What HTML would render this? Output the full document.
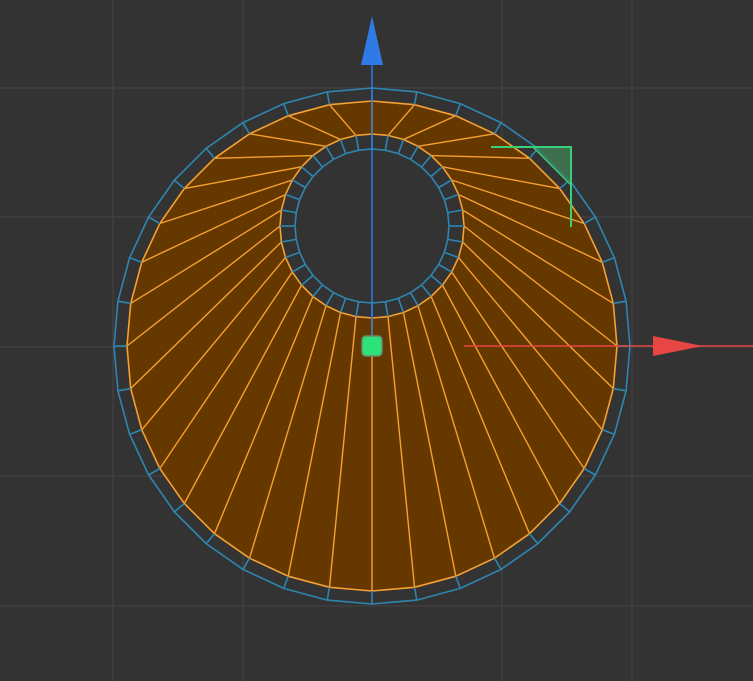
<!DOCTYPE html>
<html><head><meta charset="utf-8"><style>
html,body{margin:0;padding:0;background:#333333;width:753px;height:681px;overflow:hidden}
svg{display:block}
</style></head><body>
<svg id="s" width="753" height="681" viewBox="0 0 753 681" xmlns="http://www.w3.org/2000/svg">
<rect width="753" height="681" fill="#333333"/>
<g stroke="#3f3f3f" stroke-width="1.5">
<line x1="113" y1="0" x2="113" y2="681"/><line x1="243" y1="0" x2="243" y2="681"/>
<line x1="502" y1="0" x2="502" y2="681"/><line x1="632" y1="0" x2="632" y2="681"/>
<line x1="0" y1="88" x2="753" y2="88"/><line x1="0" y1="217" x2="753" y2="217"/>
<line x1="0" y1="476" x2="753" y2="476"/><line x1="0" y1="606" x2="753" y2="606"/>
<line x1="0" y1="347" x2="753" y2="347"/>
</g>
<g id="mesh"></g>
<line x1="372" y1="40" x2="372" y2="346" stroke="#2f7ae5" stroke-width="1.5"/>
<polygon points="372,16 361,65 383,65" fill="#2f7ae5"/>
<line x1="464" y1="346" x2="753" y2="346" stroke="#e84545" stroke-width="1.5"/>
<polygon points="653,336 653,356 703,346" fill="#e84545"/>
<polygon points="533,147 571,147 571,185" fill="#3f7a55" opacity="0.85"/>
<line x1="533" y1="147" x2="571" y2="185" stroke="#3ad07a" stroke-width="1.5"/>
<polyline points="491,147 571,147 571,227" fill="none" stroke="#3ad07a" stroke-width="2"/>
<rect x="362" y="336" width="20" height="20" rx="4" fill="#2ee27a" stroke="#6a8a70" stroke-width="1.5"/>
</svg>
<script>
(function(){
var N=36,cx=372,cy=346,R=245,RB=258,icx=372,icy=226,r=92,rb=77;
function pt(x,y,rr,k){var a=k*2*Math.PI/N;return [x+rr*Math.sin(a),y-rr*Math.cos(a)];}
function poly(x,y,rr){var p=[];for(var k=0;k<N;k++){var q=pt(x,y,rr,k);p.push(q[0].toFixed(1)+','+q[1].toFixed(1));}return p.join(' ');}
var s='';
s+='<polygon points="'+poly(cx,cy,RB)+'" fill="none" stroke="#2e86b0" stroke-width="1.6"/>';
s+='<polygon points="'+poly(cx,cy,R)+'" fill="#653800" stroke="#f5a030" stroke-width="1.6"/>';
s+='<polygon points="'+poly(icx,icy,r)+'" fill="#333333" stroke="#f5a030" stroke-width="1.6"/>';
s+='<polygon points="'+poly(icx,icy,rb)+'" fill="none" stroke="#2e86b0" stroke-width="1.6"/>';
for(var k=0;k<N;k++){
 var a=pt(cx,cy,R,k),b=pt(icx,icy,r,k),c=pt(cx,cy,RB,k),d=pt(icx,icy,rb,k);
 s+='<line x1="'+a[0]+'" y1="'+a[1]+'" x2="'+b[0]+'" y2="'+b[1]+'" stroke="#f5a030" stroke-width="1.4"/>';
 s+='<line x1="'+a[0]+'" y1="'+a[1]+'" x2="'+c[0]+'" y2="'+c[1]+'" stroke="#2e86b0" stroke-width="1.6"/>';
 s+='<line x1="'+b[0]+'" y1="'+b[1]+'" x2="'+d[0]+'" y2="'+d[1]+'" stroke="#2e86b0" stroke-width="1.6"/>';
}
document.getElementById('mesh').innerHTML=s;
})();
</script>
</body></html>
